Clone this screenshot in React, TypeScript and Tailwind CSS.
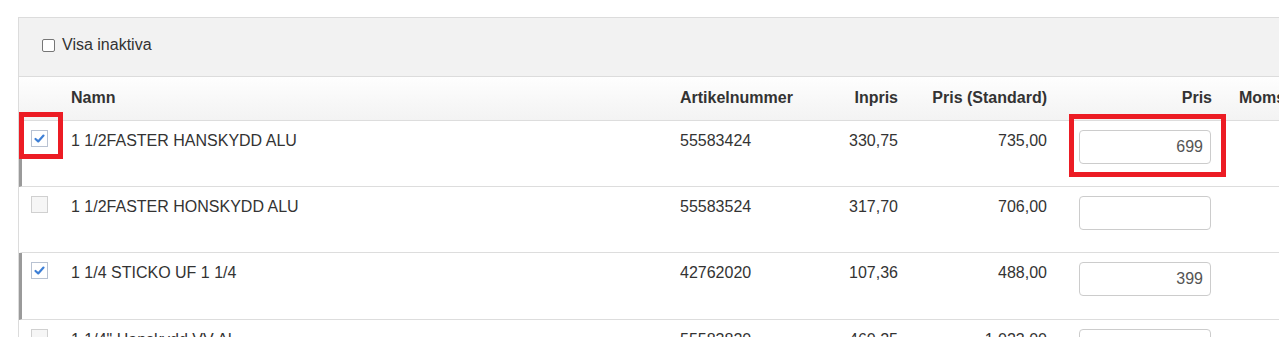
import React from "react";

type Row = {
  checked: boolean;
  name: string;
  art: string;
  inpris: string;
  std: string;
  pris: string;
};

const rows: Row[] = [
  { checked: true, name: "1 1/2FASTER HANSKYDD ALU", art: "55583424", inpris: "330,75", std: "735,00", pris: "699" },
  { checked: false, name: "1 1/2FASTER HONSKYDD ALU", art: "55583524", inpris: "317,70", std: "706,00", pris: "" },
  { checked: true, name: "1 1/4 STICKO UF 1 1/4", art: "42762020", inpris: "107,36", std: "488,00", pris: "399" },
  { checked: false, name: "1 1/4\" Hanskydd VV Al", art: "55583820", inpris: "460,25", std: "1 023,00", pris: "" },
];

const headCols = "grid grid-cols-[44px_609px_138px_96px_149px_165px_11px_160px]";
const rowCols = "grid grid-cols-[41px_609px_138px_96px_149px_165px_11px_160px]";

function RowCheck({ checked }: { checked: boolean }) {
  if (checked) {
    return (
      <span className="flex h-[17px] w-[17px] items-center justify-center border border-[#b8c2d2] bg-white">
        <svg width="13" height="13" viewBox="0 0 13 13">
          <path d="M2.5 7 L5.2 9.4 L10.5 3.6" fill="none" stroke="#3d7fd6" strokeWidth="2.2" strokeLinecap="round" strokeLinejoin="round" />
        </svg>
      </span>
    );
  }
  return <span className="block h-[17px] w-[17px] border border-[#d0d0d0] bg-[#f6f6f6]" />;
}

export default function App() {
  return (
    <div
      className="relative h-[337px] w-[1279px] overflow-hidden bg-white text-[16px] leading-[22px] text-[#333]"
      style={{ fontFamily: '"Liberation Sans", Arial, sans-serif' }}
    >
      <div className="ml-[18px] mt-[17px] w-[1400px] border border-[#dcdcdc]">
        {/* panel header */}
        <div className="flex h-[59px] items-start border-b border-[#dcdcdc] bg-[#f2f2f2] pl-[23px] pt-[16px]">
          <span className="mt-[5px] block h-[13px] w-[13px] rounded-[2px] border border-[#767676] bg-white" />
          <span className="ml-[7px]">Visa inaktiva</span>
        </div>
        {/* table header */}
        <div className={`${headCols} h-[44px] border-b border-[#dddddd] bg-linear-to-b from-[#fefefe] to-[#f3f3f3] pt-[10px] font-bold`}>
          <div />
          <div className="pl-[8px]">Namn</div>
          <div className="pl-[8px]">Artikelnummer</div>
          <div className="pr-[8px] text-right">Inpris</div>
          <div className="pr-[8px] text-right">Pris (Standard)</div>
          <div className="pr-[8px] text-right">Pris</div>
          <div />
          <div className="pl-[8px]">Moms</div>
        </div>
        {/* rows */}
        {rows.map((r, i) => (
          <div
            key={i}
            className={`${rowCols} ${i === 2 ? "h-[67px]" : "h-[66px]"} border-b border-l-[3px] border-b-[#dddddd] pt-[9px] ${r.checked ? "border-l-[#9a9a9a]" : "border-l-transparent"}`}
          >
            <div className="pl-[9px]">
              <RowCheck checked={r.checked} />
            </div>
            <div className="pl-[8px]">{r.name}</div>
            <div className="pl-[8px]">{r.art}</div>
            <div className="pr-[8px] text-right">{r.inpris}</div>
            <div className="pr-[8px] text-right">{r.std}</div>
            <div className="flex justify-end pr-[9px]">
              <div className="flex h-[34px] w-[132px] items-center justify-end rounded-[4px] border border-[#cccccc] bg-white pr-[7px] text-[#555]">
                {r.pris}
              </div>
            </div>
            <div />
            <div />
          </div>
        ))}
      </div>
      {/* annotation highlights */}
      <div className="absolute left-[19px] top-[112px] h-[47px] w-[44px] border-[5px] border-[#ec1c24]" />
      <div className="absolute left-[1069px] top-[114px] h-[63px] w-[157px] border-[5px] border-[#ec1c24]" />
    </div>
  );
}
